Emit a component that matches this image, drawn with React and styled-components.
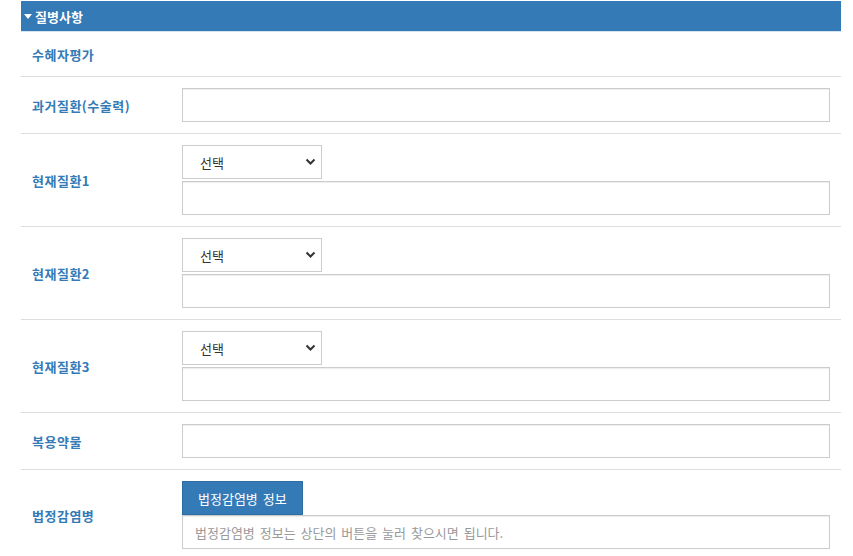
import React from "react";
import styled, { createGlobalStyle } from "styled-components";

const Global = createGlobalStyle`
  html, body { margin: 0; padding: 0; background: #fff; }
  body { font-family: "Noto Sans CJK KR", "Noto Sans", sans-serif; font-size: 13px; color: #333; }
  * { box-sizing: border-box; }
`;

const Wrapper = styled.div`
  width: 841px;
  padding: 1px 0 0 21px;
`;

const Header = styled.div`
  height: 31px;
  background: #337ab7;
  color: #fff;
  font-weight: bold;
  font-size: 13px;
  display: flex;
  align-items: center;
  gap: 3px;
  padding-left: 3px;
  border-bottom: 1px solid #d6e4f0;
`;

const Caret = styled.span`
  width: 0;
  height: 0;
  border-left: 4.5px solid transparent;
  border-right: 4.5px solid transparent;
  border-top: 5px solid #fff;
  margin-top: 1px;
`;

const Row = styled.div`
  display: flex;
  border-bottom: 1px solid #ddd;
  min-height: ${(p) => p.$min || 0}px;
`;

const Label = styled.div`
  width: 150px;
  flex: none;
  padding: 0 11px;
  display: flex;
  align-items: center;
  color: #337ab7;
  font-weight: bold;
  font-size: 13px;
  letter-spacing: 0.5px;
`;

const Field = styled.div`
  flex: 1;
  padding: 11px;
  display: flex;
  flex-direction: column;
  align-items: flex-start;
  gap: ${(p) => p.$gap ?? 2}px;
`;

const TextInput = styled.input`
  width: 648px;
  height: 34px;
  border: 1px solid #ccc;
  border-radius: 0;
  box-shadow: inset 0 1px 1px rgba(0, 0, 0, 0.075);
  padding: 6px 12px;
  font-family: inherit;
  font-size: 13px;
  word-spacing: 2px;
  color: #555;
  background: #fff;
  &::placeholder { color: #999; }
`;

const SelectWrap = styled.div`
  position: relative;
  width: 140px;
  height: 34px;
`;

const Select = styled.select`
  appearance: none;
  width: 140px;
  height: 34px;
  border: 1px solid #ccc;
  border-radius: 0;
  background: #fff;
  padding: 0 0 0 17px;
  font-family: inherit;
  font-size: 13px;
  color: #333;
`;

const Chevron = styled.svg`
  position: absolute;
  right: 6px;
  top: 13px;
  pointer-events: none;
`;

const Button = styled.button`
  height: 34px;
  padding: 0 15px;
  border: 1px solid #2e6da4;
  border-radius: 0;
  background: #337ab7;
  color: #fff;
  font-family: inherit;
  font-size: 13px;
  word-spacing: 2px;
`;

function DiseaseSelect() {
  return (
    <SelectWrap>
      <Select defaultValue="">
        <option value="">선택</option>
      </Select>
      <Chevron width="11" height="8" viewBox="0 0 11 8">
        <path d="M1.5 1.5 L5.5 5.5 L9.5 1.5" fill="none" stroke="#333" strokeWidth="2" />
      </Chevron>
    </SelectWrap>
  );
}

export default function App() {
  return (
    <>
      <Global />
      <Wrapper>
        <Header>
          <Caret />
          질병사항
        </Header>
        <Row $min={45}>
          <Label>수혜자평가</Label>
        </Row>
        <Row>
          <Label>과거질환(수술력)</Label>
          <Field>
            <TextInput />
          </Field>
        </Row>
        {[1, 2, 3].map((n) => (
          <Row key={n}>
            <Label>현재질환{n}</Label>
            <Field>
              <DiseaseSelect />
              <TextInput />
            </Field>
          </Row>
        ))}
        <Row>
          <Label>복용약물</Label>
          <Field>
            <TextInput />
          </Field>
        </Row>
        <Row>
          <Label>법정감염병</Label>
          <Field $gap={0}>
            <Button>법정감염병 정보</Button>
            <TextInput placeholder="법정감염병 정보는 상단의 버튼을 눌러 찾으시면 됩니다." />
          </Field>
        </Row>
      </Wrapper>
    </>
  );
}
